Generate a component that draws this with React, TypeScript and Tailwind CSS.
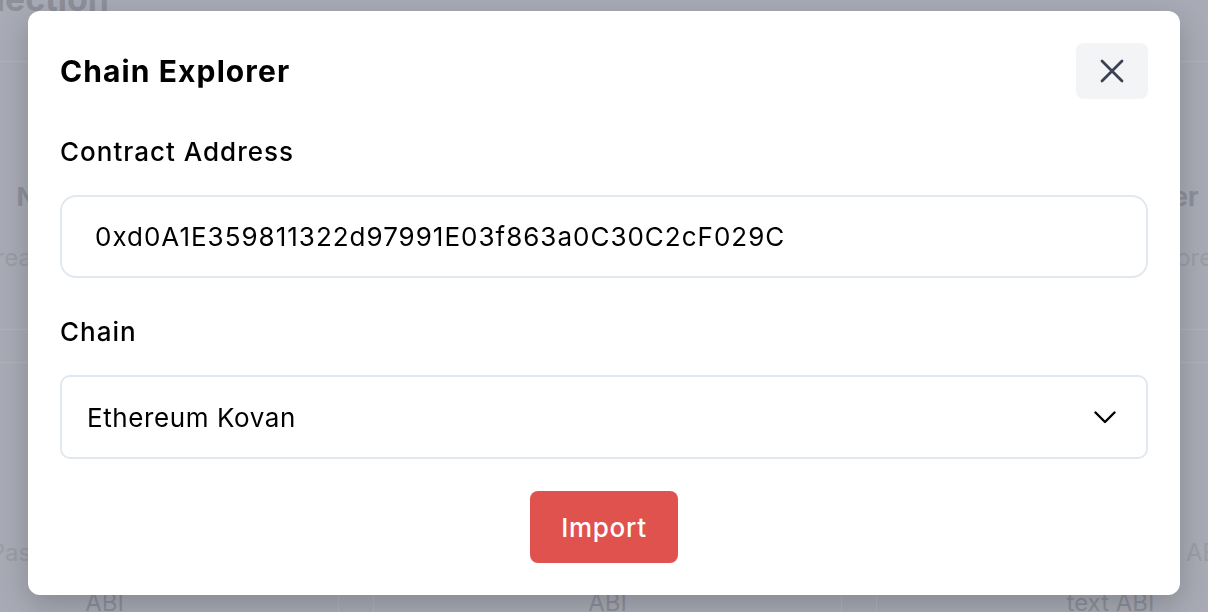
import React from 'react';

const font = { fontFamily: 'Inter, "Liberation Sans", sans-serif' };

const BgCard = ({ title, desc, button }: { title: string; desc: string; button?: string }) => (
  <div className="w-[467px] shrink-0 flex flex-col items-center text-center">
    <div className="text-[26px] font-bold text-[#8d9099] leading-none">{title}</div>
    <div className="mt-[36px] text-[24px] text-[#9a9da6] leading-none">{desc}</div>
    {button && <div className="mt-[26px] text-[24px] text-[#8d9099] leading-none">{button}</div>}
  </div>
);

const Background = () => (
  <div className="flex h-[612px] w-[1208px] flex-col overflow-hidden bg-[#a8abb5]" style={font}>
    <div className="h-[62px] shrink-0 overflow-hidden border-b border-[#b0b3bc]">
      <div className="-mt-[18px] -ml-[200px] text-[34px] font-bold text-[#8d9099] leading-none">Contract Selection</div>
    </div>
    <div className="h-[268px] shrink-0 border-b border-[#b0b3bc] pt-[122px]">
      <div className="-ml-[130px] flex gap-[34px]">
        <BgCard title="New Contract" desc="Create a new contract" />
        <BgCard title="Import Contract" desc="Import a contract" />
        <BgCard title="Chain Explorer" desc="Import from explorer" />
      </div>
    </div>
    <div className="h-[33px] shrink-0 border-b border-[#b0b3bc]" />
    <div className="-ml-[130px] flex shrink-0 gap-[34px]">
      {[
        ['Paste ABI', 'Paste a contract ABI', 'ABI'],
        ['Upload ABI', 'Upload a file ABI', 'ABI'],
        ['Text ABI', 'Import from text ABI', 'text ABI'],
      ].map(([t, d, b]) => (
        <div key={t} className="h-[300px] border-x border-[#b0b3bc] pt-[116px]">
          <BgCard title={t} desc={d} button={b} />
        </div>
      ))}
    </div>
  </div>
);

export default function App() {
  return (
    <div className="relative h-[612px] w-[1208px] overflow-hidden">
      <Background />
      <div className="fixed inset-0 flex items-start justify-center pt-[11px]" style={font}>
        <div className="w-[1152px] rounded-xl bg-white px-8 pt-8 pb-8 shadow-[0_10px_30px_rgba(0,0,0,0.2)]">
          <div className="flex items-center justify-between">
            <h2 className="text-[30px] font-bold tracking-[1.1px] text-black">Chain Explorer</h2>
            <button className="flex h-[56px] w-[72px] items-center justify-center rounded-lg bg-[#f3f4f6]">
              <svg width="24" height="24" viewBox="0 0 24 24" fill="none" stroke="#3b4152" strokeWidth="2.8" strokeLinecap="round">
                <path d="M2 2L22 22M22 2L2 22" />
              </svg>
            </button>
          </div>

          <label className="mt-[33px] block text-[26px] font-medium leading-[39px] tracking-[1px] text-black">Contract Address</label>
          <div className="mt-[24px] flex h-[83px] items-center rounded-2xl border-2 border-[#e2e8f0] pl-[33px] text-[26px] tracking-[1px] text-black">
            0xd0A1E359811322d97991E03f863a0C30C2cF029C
          </div>

          <label className="mt-[34px] block text-[26px] font-medium leading-[39px] tracking-[1px] text-black">Chain</label>
          <div className="mt-[24px] flex h-[84px] items-center justify-between rounded-[10px] border-2 border-[#e2e8f0] pl-[25px] pr-[30px] text-[26px] text-black">
            <span className="tracking-[0.6px]">Ethereum Kovan</span>
            <svg width="22" height="13" viewBox="0 0 22 13" fill="none" stroke="black" strokeWidth="2.4" strokeLinecap="round" strokeLinejoin="round">
              <path d="M1.5 1.5L11 11L20.5 1.5" />
            </svg>
          </div>

          <div className="mt-[32px] flex justify-center">
            <button className="h-[72px] w-[148px] rounded-lg bg-[#e0524d] text-[26px] font-medium tracking-[0.7px] text-white">Import</button>
          </div>
        </div>
      </div>
    </div>
  );
}
